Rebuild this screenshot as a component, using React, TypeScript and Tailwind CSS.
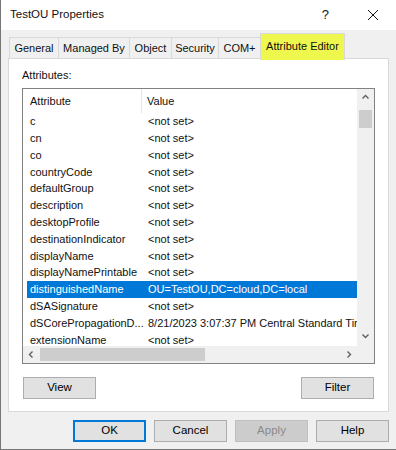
import React from "react";

const rows: [string, string][] = [
  ["c", "<not set>"],
  ["cn", "<not set>"],
  ["co", "<not set>"],
  ["countryCode", "<not set>"],
  ["defaultGroup", "<not set>"],
  ["description", "<not set>"],
  ["desktopProfile", "<not set>"],
  ["destinationIndicator", "<not set>"],
  ["displayName", "<not set>"],
  ["displayNamePrintable", "<not set>"],
  ["distinguishedName", "OU=TestOU,DC=cloud,DC=local"],
  ["dSASignature", "<not set>"],
  ["dSCorePropagationD...", "8/21/2023 3:07:37 PM Central Standard Tim"],
  ["extensionName", "<not set>"],
];

const tabs = [
  { label: "General", w: "w-[49px]" },
  { label: "Managed By", w: "w-[71px]" },
  { label: "Object", w: "w-[42px]" },
  { label: "Security", w: "w-[47px]" },
  { label: "COM+", w: "w-[42px]" },
];

// little chevron used by the scroll bars
const Chevron = ({ dir }: { dir: "up" | "down" | "left" | "right" }) => {
  const d = {
    up: "M1.5 5.5 L4.5 2.5 L7.5 5.5",
    down: "M1.5 3.5 L4.5 6.5 L7.5 3.5",
    left: "M5.5 1.5 L2.5 4.5 L5.5 7.5",
    right: "M3.5 1.5 L6.5 4.5 L3.5 7.5",
  }[dir];
  return (
    <svg width="9" height="9" viewBox="0 0 9 9" fill="none" stroke="#606060" strokeWidth="1.4">
      <path d={d} />
    </svg>
  );
};

const Btn = ({ children, primary, disabled }: { children: React.ReactNode; primary?: boolean; disabled?: boolean }) => (
  <div
    className={
      "flex h-[22px] w-[73px] items-center justify-center text-[11.5px] " +
      (primary
        ? "border-2 border-[#0078d7] bg-[#e1e1e1] text-black"
        : disabled
        ? "border border-[#bfbfbf] bg-[#cccccc] text-[#8a8a8a]"
        : "border border-[#adadad] bg-[#e1e1e1] text-black")
    }
  >
    {children}
  </div>
);

export default function App() {
  return (
    <div
      className="flex h-[450px] w-[396px] flex-col border-b border-l border-[#777777] bg-[#f0f0f0] text-[#111]"
      style={{ fontFamily: '"Liberation Sans", Arial, sans-serif' }}
    >
      {/* title bar */}
      <div className="flex h-[30px] items-center bg-white pl-[9px]">
        <span className="text-[11.5px]">TestOU Properties</span>
        <span className="ml-auto mr-[38px] text-[13px]">?</span>
        <svg width="12" height="12" viewBox="0 0 12 12" className="mr-[17px]" stroke="#111" strokeWidth="1">
          <path d="M1 1 L11 11 M11 1 L1 11" />
        </svg>
      </div>

      {/* tabs */}
      <div className="ml-[8px] mt-[3px] flex h-[25px] items-end text-[11px]">
        {tabs.map((t) => (
          <div
            key={t.label}
            className={`flex h-[21px] ${t.w} items-center justify-center border border-r-0 border-b-0 border-[#d9d9d9] bg-[#f0f0f0]`}
          >
            {t.label}
          </div>
        ))}
        <div className="relative z-10 -mb-[2px] flex h-[27px] w-[85px] items-center justify-center border border-b-0 border-[#d9d9d9] bg-[#eef74e] pb-[2px]">
          Attribute Editor
        </div>
      </div>

      {/* tab page */}
      <div className="ml-[7px] flex h-[354px] w-[381px] flex-col border border-[#d9d9d9] bg-white px-[13px] pt-[9px] text-[11px]">
        <div className="mb-[6px] h-[14px] leading-[14px]">Attributes:</div>

        <div className="flex h-[276px] w-[353px] border border-[#828282]">
          <div className="flex min-w-0 flex-1 flex-col">
            <div className="flex h-[24px] shrink-0 items-center">
              <div className="flex h-full w-[119px] items-center border-r border-[#e5e5e5] pl-[7px]">Attribute</div>
              <div className="pl-[5px]">Value</div>
            </div>
            <div className="ml-[4px] min-h-0 flex-1 overflow-hidden">
              {rows.map(([a, v], i) => {
                const sel = a === "distinguishedName";
                return (
                  <div
                    key={i}
                    className={"flex h-[16.8px] items-center whitespace-nowrap " + (sel ? "bg-[#0078d7] text-white" : "")}
                  >
                    <div className="w-[118px] shrink-0 pl-[3px]">{a}</div>
                    <div className="pl-[3px]">{v}</div>
                  </div>
                );
              })}
            </div>
            {/* horizontal scroll bar */}
            <div className="flex h-[17px] shrink-0 items-center bg-[#f0f0f0]">
              <div className="flex w-[17px] justify-center">
                <Chevron dir="left" />
              </div>
              <div className="h-[13px] w-[165px] bg-[#cdcdcd]" />
              <div className="ml-auto flex w-[17px] justify-center">
                <Chevron dir="right" />
              </div>
            </div>
          </div>
          {/* vertical scroll bar + corner */}
          <div className="flex w-[17px] shrink-0 flex-col items-center bg-[#f0f0f0]">
            <div className="flex h-[17px] items-center">
              <Chevron dir="up" />
            </div>
            <div className="mt-[4px] h-[18px] w-[13px] bg-[#cdcdcd]" />
            <div className="mb-[19px] mt-auto flex h-[17px] items-center">
              <Chevron dir="down" />
            </div>
          </div>
        </div>

        <div className="mt-[13px] flex justify-between">
          <div className="ml-[1px]">
            <Btn>View</Btn>
          </div>
          <div className="mr-[1px]">
            <Btn>Filter</Btn>
          </div>
        </div>
      </div>

      {/* dialog buttons */}
      <div className="mr-[7px] mt-[8px] flex justify-end gap-[8px]">
        <Btn primary>OK</Btn>
        <Btn>Cancel</Btn>
        <Btn disabled>Apply</Btn>
        <Btn>Help</Btn>
      </div>
    </div>
  );
}
